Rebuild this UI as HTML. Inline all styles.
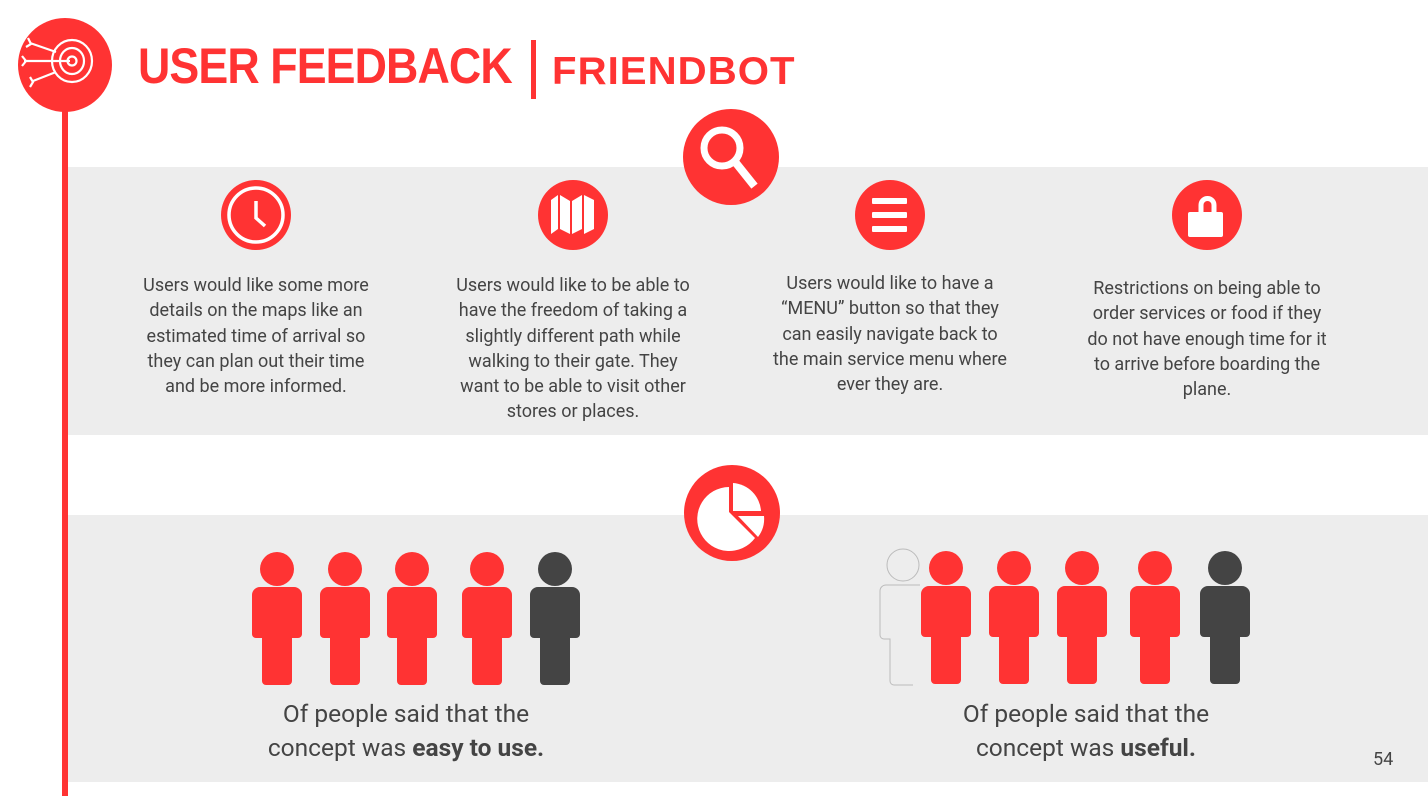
<!DOCTYPE html>
<html><head><meta charset="utf-8"><style>
*{margin:0;padding:0;box-sizing:border-box}
body{width:1428px;height:796px;background:#fff;position:relative;overflow:hidden;font-family:Roboto,"Liberation Sans",sans-serif;color:#444}
.band{position:absolute;left:68px;right:0;background:#ededed}
.abs{position:absolute}
.t{position:absolute;width:250px;text-align:center;font-size:18px;line-height:25.3px;color:#444}
.b{position:absolute;width:400px;text-align:center;font-size:24.5px;line-height:34px;color:#444}
</style></head><body>
<div class="band" style="top:167px;height:268px"></div>
<div class="band" style="top:515px;height:267px"></div>
<div class="abs" style="left:62px;top:100px;width:6px;height:696px;background:#f33"></div>
<svg class="abs" style="left:0;top:0" width="1428" height="796">
<circle cx="65" cy="65" r="47" fill="#f33"/>
<g fill="none" stroke="#fff" stroke-width="2.2">
<ellipse cx="72" cy="61" rx="20" ry="21"/><ellipse cx="72" cy="61" rx="12" ry="13"/><circle cx="72" cy="61" r="4.5"/>
<path d="M24 61H70M30 43L56 52M33 81L56 72M22 56l4 5-4 5M28 38l3 6-5 3M30 77l3 5-3 5"/>
</g>
<circle cx="731" cy="157" r="48" fill="#f33"/>
<circle cx="722" cy="148" r="18" fill="none" stroke="#fff" stroke-width="7"/>
<path d="M736 163L752 183" stroke="#fff" stroke-width="8" stroke-linecap="square"/>
<circle cx="256" cy="215" r="35" fill="#f33"/>
<circle cx="256" cy="215" r="27" fill="none" stroke="#fff" stroke-width="3.5"/>
<path d="M256 201V218L265 226" fill="none" stroke="#fff" stroke-width="3.5"/>
<circle cx="573" cy="215" r="35" fill="#f33"/>
<path d="M551 200L558 195V229L551 234ZM560 195L570 201V234L560 229ZM572 201L582 195V229L572 234ZM584 195L594 200V229L584 234Z" fill="#fff"/>
<circle cx="890" cy="215" r="35" fill="#f33"/>
<g fill="#fff"><rect x="872" y="198" width="35" height="6" rx="1"/><rect x="872" y="212" width="35" height="6" rx="1"/><rect x="872" y="226" width="35" height="6" rx="1"/></g>
<circle cx="1207" cy="215" r="35" fill="#f33"/>
<path d="M1201 213v-8a6.5 6.5 0 0 1 13 0v8" fill="none" stroke="#fff" stroke-width="5"/>
<rect x="1188" y="212" width="35" height="25" rx="2" fill="#fff"/>
<circle cx="732" cy="513" r="48" fill="#f33"/>
<path d="M729 487A32 32 0 1 0 755 538L729 512Z" fill="#fff"/>
<path d="M733 483A30 30 0 0 1 761 511H733Z" fill="#fff"/>
<path d="M738 516H764A30 30 0 0 1 758 537Z" fill="#fff"/>
<defs>
<g id="p"><circle cx="0" cy="0" r="17"/><path d="M-25 26a8 8 0 0 1 8-8h34a8 8 0 0 1 8 8v39a4 4 0 0 1-4 4h-6v43a4 4 0 0 1-4 4h-22a4 4 0 0 1-4-4v-43h-6a4 4 0 0 1-4-4z"/></g>
</defs>
<g fill="#f33">
<use href="#p" x="277" y="569"/><use href="#p" x="345" y="569"/><use href="#p" x="412" y="569"/><use href="#p" x="487" y="569"/>
<use href="#p" x="946" y="568"/><use href="#p" x="1014" y="568"/><use href="#p" x="1082" y="568"/><use href="#p" x="1155" y="568"/>
</g>
<g fill="#444"><use href="#p" x="555" y="569"/><use href="#p" x="1225" y="568"/></g>
<g fill="none" stroke="#bbb" stroke-width="1"><circle cx="903" cy="565" r="16"/><path d="M880 598v-7a6 6 0 0 1 6-6h34M880 598v37a4 4 0 0 0 4 4h6v42a4 4 0 0 0 4 4h19"/></g>
</svg>
<div class="abs" style="left:138px;top:37px;font-family:'Liberation Sans',sans-serif;font-weight:bold;font-size:50px;color:#f33;letter-spacing:-1px;transform:scaleX(0.895);transform-origin:left;white-space:nowrap">USER FEEDBACK</div>
<div class="abs" style="left:531px;top:40px;width:5px;height:59px;background:#f33"></div>
<div class="abs" style="left:552px;top:50px;font-family:'Liberation Sans',sans-serif;font-weight:bold;font-size:39px;color:#f33;letter-spacing:1px;transform:scaleX(1.03);transform-origin:left;white-space:nowrap">FRIENDBOT</div>
<div class="t" style="left:131px;top:273px">Users would like some more details on the maps like an estimated time of arrival so they can plan out their time and be more informed.</div>
<div class="t" style="left:448px;top:273px">Users would like to be able to have the freedom of taking a slightly different path while walking to their gate. They want to be able to visit other stores or places.</div>
<div class="t" style="left:768px;top:271px;width:244px">Users would like to have a “MENU” button so that they can easily navigate back to the main service menu where ever they are.</div>
<div class="t" style="left:1082px;top:276px">Restrictions on being able to order services or food if they do not have enough time for it to arrive before boarding the plane.</div>
<div class="b" style="left:206px;top:697px">Of people said that the<br>concept was <b>easy to use.</b></div>
<div class="b" style="left:886px;top:697px">Of people said that the<br>concept was <b>useful.</b></div>
<div class="abs" style="left:1373px;top:749px;font-size:18px;color:#444">54</div>
</body></html>
